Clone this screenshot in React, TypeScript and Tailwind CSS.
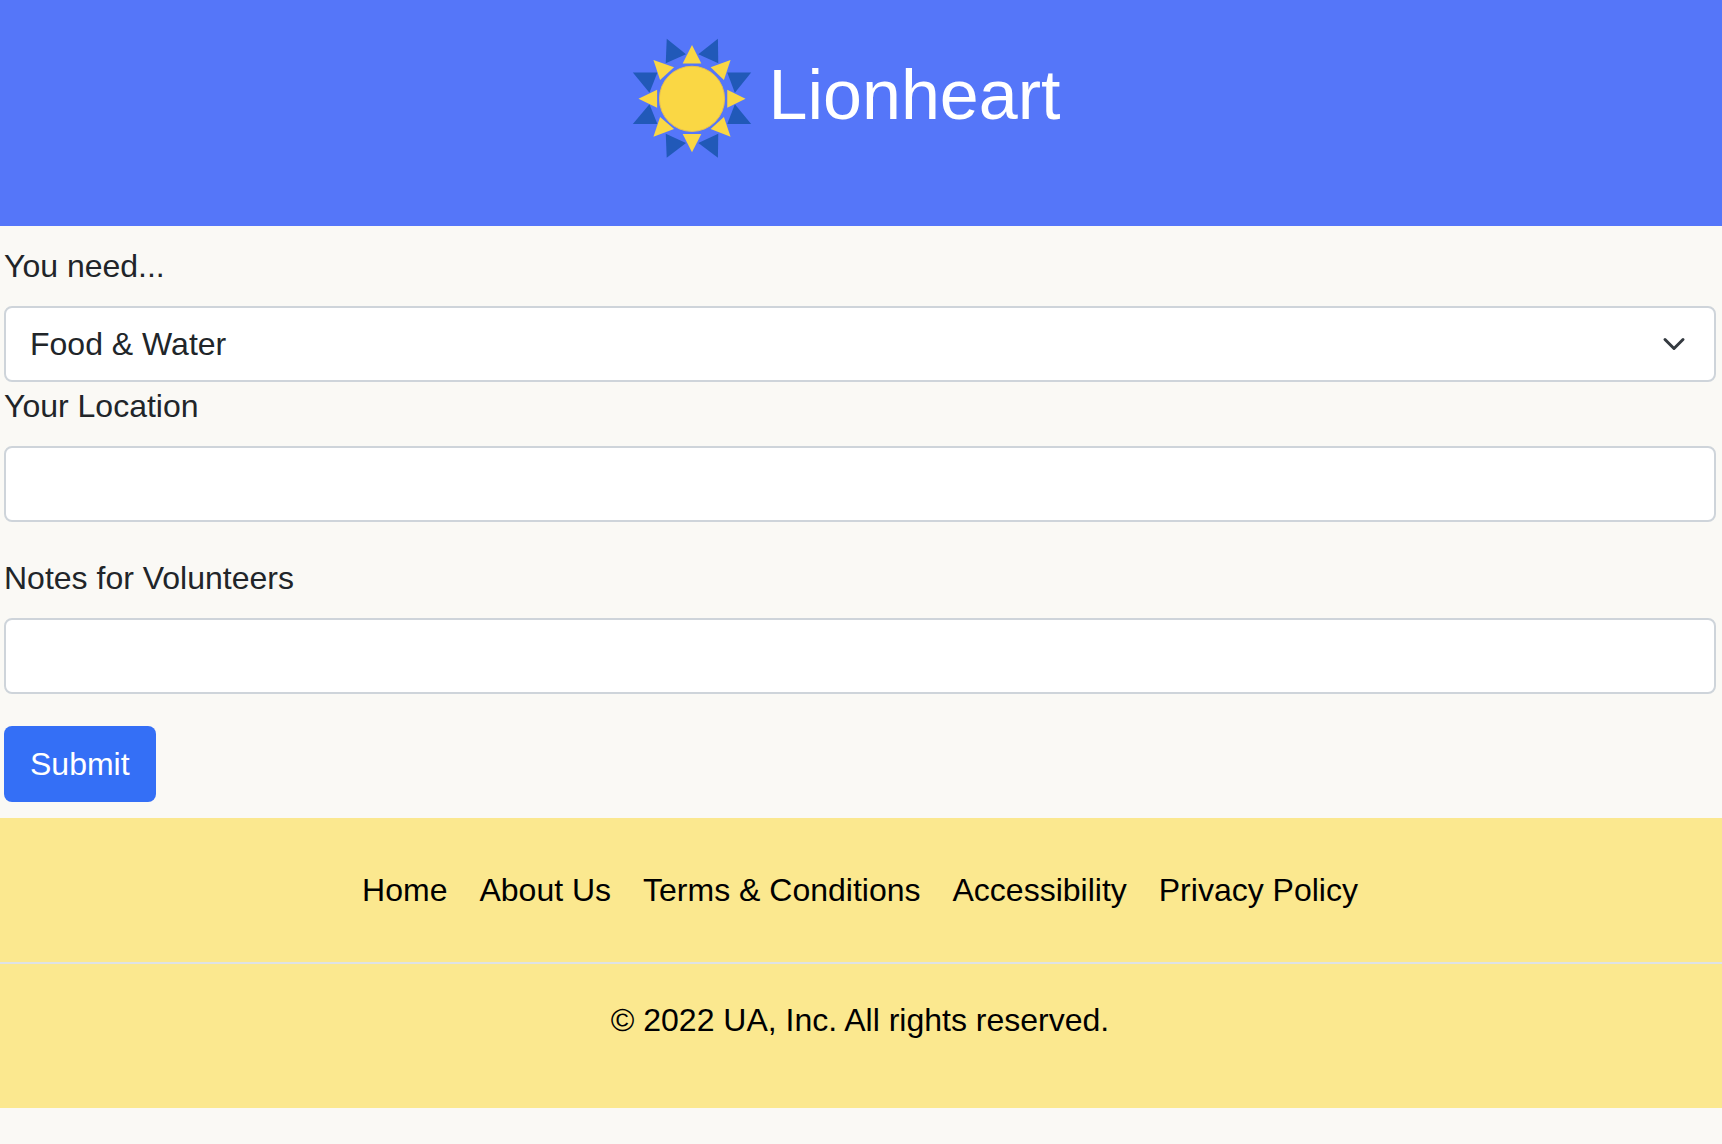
import { ChangeEvent, useState } from 'react';

const footerLinks = ['Home', 'About Us', 'Terms & Conditions', 'Accessibility', 'Privacy Policy'];

const darkRays = [
  '140,26 198,73 137,100',
  '294,26 235,73 295,100',
  '394,128 322,128 345,189',
  '394,283 322,283 345,223',
  '38,128 112,128 88,189',
  '38,283 112,283 88,223',
  '140,384 198,340 137,312',
  '294,384 235,340 295,312',
];

const lightRays = [
  '216,45 188,101 244,101',
  '216,368 188,313 244,313',
  '55,207 111,180 111,234',
  '377,207 322,180 322,234',
  '100,90 162,112 120,150',
  '332,90 272,112 312,150',
  '100,321 162,298 120,262',
  '332,321 272,298 312,262',
];

function SunLogo() {
  return (
    <svg viewBox="36 24 360 364" className="w-[120px] h-[121px] shrink-0" aria-label="Lionheart logo">
      {darkRays.map((points) => (
        <polygon key={points} points={points} fill="#2159b8" />
      ))}
      {lightRays.map((points) => (
        <polygon key={points} points={points} fill="#fad744" />
      ))}
      <circle cx="216" cy="207" r="98" fill="#fad744" stroke="#e9c04c" strokeWidth="3" />
    </svg>
  );
}

const fieldClass =
  'block w-full h-[76px] rounded-lg border-2 border-[#ced4da] bg-white px-6 py-3 text-[32px] leading-[48px] text-[#212529] outline-none';

export default function App() {
  const [location, setLocation] = useState('');
  const [notes, setNotes] = useState('');

  return (
    <div className="min-h-screen bg-[#faf9f5] font-['Liberation_Sans',Arial,sans-serif] text-[32px] leading-[48px] text-[#212529]">
      <header className="h-[226px] bg-[#5576f9] pt-[38px] pr-[30px]">
        <div className="flex justify-center gap-[17px]">
          <SunLogo />
          <h1 className="mt-[15px] text-[70px] leading-[84px] font-normal text-white">Lionheart</h1>
        </div>
      </header>

      <form className="pt-4 pl-1 pr-[6px]">
        <label className="block mb-4">You need...</label>
        <div className="relative">
          <select className={`${fieldClass} appearance-none`} defaultValue="food">
            <option value="food">Food &amp; Water</option>
            <option value="shelter">Shelter</option>
            <option value="medical">Medical</option>
          </select>
          <svg
            viewBox="0 0 16 16"
            className="absolute top-[26px] right-[30px] w-6 h-6 pointer-events-none"
            fill="none"
            stroke="#343a40"
            strokeWidth="2"
            strokeLinecap="round"
            strokeLinejoin="round"
          >
            <path d="m2 5 6 6 6-6" />
          </svg>
        </div>

        <label className="block mb-4">Your Location</label>
        <input
          className={`${fieldClass} mb-8`}
          value={location}
          onChange={(e: ChangeEvent<HTMLInputElement>) => setLocation(e.target.value)}
        />

        <label className="block mb-4">Notes for Volunteers</label>
        <input
          className={`${fieldClass} mb-8`}
          value={notes}
          onChange={(e: ChangeEvent<HTMLInputElement>) => setNotes(e.target.value)}
        />

        <button type="button" className="h-[76px] rounded-lg bg-[#346ff6] px-[26px] text-white">
          Submit
        </button>
      </form>

      <footer className="mt-4 h-[290px] bg-[#fbe88f] text-black">
        <nav className="flex justify-center gap-8 pt-12 pb-12 pr-[2px]">
          {footerLinks.map((link) => (
            <a key={link} href="#">
              {link}
            </a>
          ))}
        </nav>
        <div className="border-t-2 border-[#dee2e6] pt-8 pr-[2px] text-center">© 2022 UA, Inc. All rights reserved.</div>
      </footer>
    </div>
  );
}
